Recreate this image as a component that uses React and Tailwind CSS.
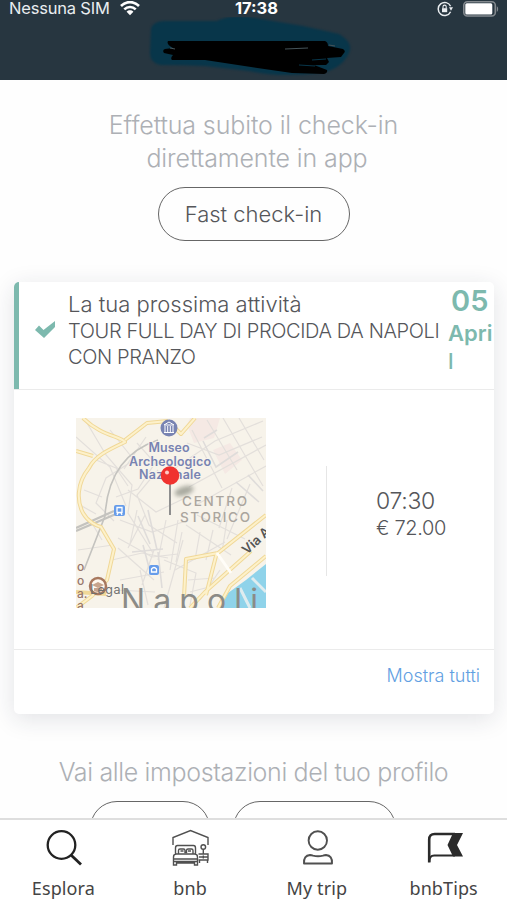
import React from 'react';

const StatusBar = () => (
  <div className="grid h-[17px] grid-cols-3 items-center px-2 text-[16.500px] leading-[17px] text-[#e9edf0]">
    <div className="flex items-center gap-2.5 pl-px whitespace-nowrap">
      <span className="tracking-[-0.2px]">Nessuna SIM</span>
      <svg className="h-[15px] w-5" viewBox="0 0 20 15" fill="none" stroke="#fff" strokeWidth="2.6">
        <path d="M1 5C6 -.2 14 -.2 19 5" />
        <path d="M4.3 8.4c3.2-3.2 8.2-3.2 11.4 0" />
        <path d="M6.6 10.7c1.9-1.8 4.9-1.8 6.8 0L10 14.3z" fill="#fff" stroke="none" />
      </svg>
    </div>
    <span className="pl-1.5 text-center font-bold text-white">17:38</span>
    <div className="flex items-center justify-end gap-2.5">
      <svg className="h-4 w-4" viewBox="0 0 16 16" fill="none" stroke="#e9edf0" strokeWidth="1.5">
        <path d="M13.6 5.2A6.5 6.5 0 1 0 13.6 10.7" />
        <path d="M12 6.2h4l-2 3.5z" fill="#e9edf0" stroke="none" />
        <path d="M5 7.2h5.2v4H5z" fill="#e9edf0" stroke="none" />
        <path d="M6 7.5V5.7a1.6 1.6 0 0 1 3.2 0v1.8" strokeWidth="1.1" />
      </svg>
      <svg className="h-4 w-9" viewBox="0 0 36 16">
        <rect x=".8" y=".8" width="31.5" height="14.2" rx="3.5" fill="none" stroke="#83898e" strokeWidth="1.6" />
        <rect x="2.3" y="2.3" width="27" height="11.2" rx="1.5" fill="#fff" />
        <path d="M33.8 5.2c1.8.8 1.8 4.8 0 5.6z" fill="#83898e" />
      </svg>
    </div>
  </div>
);

const Header = () => (
  <header className="h-20 shrink-0 bg-[#273640]">
    <StatusBar />
    {/* Scribbled-over title */}
    <svg className="ml-[148px] block h-[62px] w-[212px]" viewBox="148 17 212 62">
      <path
        d="M151 29q2-8 14-8h52q14-7 38-3l48 8 36 8q15 9 10 19-8 17-30 20-38 5-70-2L205 66q-22-1-44-1-11-2-11-12z"
        fill="#08364a"
        className="blur-[1px]"
      />
      <path
        d="M168 41h157q3 1 3 5l15 3q3 2 1 4l-3 4-14 1 2 4-3 3h-12l13 5q1 3-3 4l-32-1-41-6-46-7h-33q-2-2 1-5l-9-2q-2-3 1-4l8-1q-7-4-5-7z"
        fill="#000"
      />
      <path d="M285 49l23-1M170 48l5 1M329 45l6 1" stroke="#46545a" fill="none" />
      <path d="M312 60l14-1M299 65l16 1" stroke="#08364a" strokeWidth="1" fill="none" />
    </svg>
  </header>
);

const CityMap = () => (
  <svg className="h-[190px] w-[190px]" viewBox="76 418 190 190" fontFamily="Inter, sans-serif">
    <rect x="76" y="418" width="190" height="190" fill="#f7f3ea" />
    <path d="M190 418h30l-6 20-20 5-7-18zM213 450l17-7 12 17-17 14z" fill="#f5e9e4" />
    <path d="M266 564l-20 16-18 13-8 15h46z" fill="#8fd3ea" />
    <path d="M240 588l10 20M252 578l14 14" stroke="#dfecef" strokeWidth="3" />

    {/* Minor streets */}
    <g fill="none" stroke="#e3dfdb" strokeWidth="1.2">
      <path d="M84 418l22 37 26 30-4 28 25 40M76 437l34 30 16 39M110 430l24 30-28 18-10 25 18 18M137 443l18 20-17 26-22 8M96 460l20 8 12 18M146 437l-22 32M158 470l-21 25 12 30 28 18M128 490l28 22 27-13M120 520l32 12 31-10M118 538l34 19 26-3M145 515l-17 33M137 510l-7 34M166 520l-8 40M178 520l-8 50M118 548l36 32M140 570l8 35M154 550l-12 35M164 560l32 13-6 32M183 540l-19 68" />
      <path d="M187 443l32 12 43-18M175 468l40-27 48-20M192 430l30 58M207 420l30 50M223 418l40 68M239 418l25 42M189 487l77-42M196 505l70-39M232 488l-13 40M250 484l-23 55M186 525l45 30M197 515l48 24M175 570l50-28M182 532l-6 30M200 532l-5 28M213 530l-7 30M227 520l-5 32" />
      <path d="M112 560l30-7 26 5M120 580l44-8M115 590l40 2M90 520l12 20M78 550l35-5M200 600l20-30M188 580l27-2M190 592l23-6M84 490l18 7M80 505l16 9" />
    </g>
    <g fill="none" stroke="#dfdcda" strokeWidth="1.600">
      <path d="M138 516l12 28M148 510l9 40M143 545l8 30M158 552l4 36M132 552l31-3" />
      <path d="M204 438l13-8M203 441l13 26 22-15M236 482l23 20M248 475l15 16" />
    </g>

    {/* Railway */}
    <g fill="none" stroke="#c4c3bf" strokeWidth="1.6">
      <path d="M158 440c-36 12-51 40-53 76L84 570" />
      <path d="M76 531l40-17M76 528l38-17" strokeWidth="2.2" />
    </g>

    {/* Main roads */}
    <g fill="none" stroke="#f0d898" strokeWidth="4" strokeLinejoin="round">
      <path d="M83 418c18 18 37 18 42 24 -17 8-30 14-36 26-13 16-12 34-6 45 5 9 14 13 18 14l13 22-7 31-15 16-16 12" />
      <path d="M76 451l17 5M125 440l22-17 21-2M168 421l13 13 14-16" />
      <path d="M266 515l-48 38-32 6-2 38M217 552l-11 43M190 608l15-16 46-41M218 608l12-22 36-30" />
      <path d="M76 592l30 2" />
    </g>
    <g fill="none" stroke="#fdf1ca" strokeWidth="2" strokeLinejoin="round">
      <path d="M83 418c18 18 37 18 42 24 -17 8-30 14-36 26-13 16-12 34-6 45 5 9 14 13 18 14l13 22-7 31-15 16-16 12" />
      <path d="M76 451l17 5M125 440l22-17 21-2M168 421l13 13 14-16" />
      <path d="M266 515l-48 38-32 6-2 38M217 552l-11 43M190 608l15-16 46-41M218 608l12-22 36-30" />
    </g>
    <path d="M217 553l14 20" stroke="#fffdf8" strokeWidth="3" />

    {/* Stations */}
    <g fill="#669cea">
      <rect x="114" y="505" width="11" height="11" rx="2" />
      <rect x="149" y="565" width="10" height="10" rx="2" />
    </g>
    <g fill="none" stroke="#fff" strokeWidth="1.3">
      <path d="M117 507.500h5v5h-5zM117 515l1-2M122 515l-1-2" />
      <path d="M151.500 572v-3q2.500-3 5 0v3z" />
    </g>

    {/* Museum marker */}
    <circle cx="169" cy="428" r="8.500" fill="#7883b2" />
    <path d="M164 425l5-3 5 3zM165 426v6M167.700 426v6M170.300 426v6M173 426v6M164 432.500h10" fill="none" stroke="#fff" strokeWidth="1" />

    <g fill="#7883b2" fontSize="12.500" fontWeight="600" textAnchor="middle" stroke="#f7f3ea" strokeWidth="2" paintOrder="stroke">
      <text x="169" y="452" textLength="41">Museo</text>
      <text x="170" y="465.500" textLength="82">Archeologico</text>
      <text x="170" y="479" textLength="62">Nazionale</text>
    </g>
    <g fill="#aaa59e" fontSize="13.500" fontWeight="500">
      <text x="182" y="506" textLength="65">CENTRO</text>
      <text x="180" y="521.500" textLength="70">STORICO</text>
    </g>
    <text x="247" y="555" fill="#555" fontSize="13" fontWeight="600" transform="rotate(-43 247 555)">Via A</text>

    <text x="121" y="612" fill="#8b8b87" fontSize="32" textLength="137">Napoli</text>
    <g fill="#98766a" fontSize="12" fontWeight="500">
      <text x="77" y="571">o</text>
      <text x="77" y="584.500">o</text>
      <text x="77" y="598">a.</text>
      <text x="77" y="610">a</text>
    </g>
    <circle cx="98" cy="586" r="8" fill="#fff8ee" stroke="#a8785e" strokeWidth="2.500" />
    <path d="M92 585l6-3 6 3-6 3zM94 588v3q4 2 8 0v-3" fill="#c7a48c" />
    <text x="90" y="594" fill="#707070" fontSize="12.500" textLength="34">Legal</text>

    {/* Pin */}
    <ellipse cx="184" cy="491" rx="10" ry="4.500" fill="#777b70" opacity=".6" transform="rotate(-18 184 491)" className="blur-[2px]" />
    <path d="M170 482v33" stroke="#8e8e8e" strokeWidth="2" />
    <circle cx="170" cy="475.500" r="9.300" fill="#f0322f" />
    <circle cx="167" cy="472.500" r="2" fill="#ffc9c5" />
  </svg>
);

const ActivityCard = () => (
  <section className="mx-3.5 mt-[41px] h-[432px] w-[480px] overflow-hidden rounded-[5px] bg-white shadow-[0_5px_24px_rgba(30,40,60,0.13)]">
    <div className="flex h-[108px] border-b border-[#ebebeb]">
      <div className="h-[107px] w-[5px] shrink-0 bg-[#7db9ae]" />
      <div className="flex w-[49px] shrink-0 pt-[38px] pl-4">
        <svg className="h-[19px] w-[21px]" viewBox="0 0 21 19">
          <path d="M0 10l4-4.500 4.500 4.500L20 1v6L9 18z" fill="#7db9ae" />
        </svg>
      </div>
      <div className="w-[380px] shrink-0 pt-[9px] font-light whitespace-nowrap text-[#55565a]">
        <h2 className="text-[22px] leading-[27px]">La tua prossima attività</h2>
        <p className="text-[20px] leading-[26px] tracking-[-0.370px]">
          TOUR FULL DAY DI PROCIDA DA NAPOLI
          <br />
          CON PRANZO
        </p>
      </div>
      <div className="w-[46px] font-semibold text-[#7db9ae]">
        <p className="pt-px pl-[3px] text-[29px] leading-9">05</p>
        <p className="w-[46px] text-[22px] leading-7">
          Apri
          <br />
          <span className="font-medium">l</span>
        </p>
      </div>
    </div>
    <div className="flex h-[260px] border-b border-[#ebebeb]">
      <div className="w-[312px] pt-7 pl-[62px]">
        <CityMap />
      </div>
      <div className="mt-[76px] h-[110px] w-px bg-[#e6e6e6]" />
      <div className="pt-[97px] pl-[49px] font-light text-[#55565a]">
        <p className="text-[23px] leading-[28px] tracking-[-0.300px]">07:30</p>
        <p className="text-[20px] leading-[26px] tracking-[-0.350px]">€ 72.00</p>
      </div>
    </div>
    <div className="pt-3 pr-3.5 text-right text-[18px] leading-7 font-light text-[#62a0e2]">Mostra tutti</div>
  </section>
);

const SearchIcon = () => (
  <svg className="h-10 w-10" viewBox="0 0 40 40" fill="none" stroke="#222" strokeWidth="2.300">
    <circle cx="18.500" cy="17" r="13.800" />
    <path d="M28 27l10 9.500" strokeWidth="2.800" />
  </svg>
);

const BedIcon = () => (
  <svg className="h-10 w-10" viewBox="0 0 40 40" fill="none" stroke="#505050" strokeWidth="1.400">
    <path d="M3 17V9.500L20.500 2.500l17.500 7V17" />
    <path d="M5.500 26v-6q0-2.500 2-2.500h16q2 0 2 2.500v6M3.500 37v-8q0-3 3-3h18q3 0 3 3v8h-3v-2H6.500v2zM3.500 31h24M3.500 33.500h24" />
    <path d="M8.500 26v-3.500q0-1.500 1.500-1.500h3.500q1.500 0 1.500 1.500v2h1.500v-2q0-1.500 1.500-1.500h3.500q1.500 0 1.500 1.500V26M10.500 23h3M18 23h3" />
    <path d="M28.500 26H38v6h-9.500M29 29h9M37.500 32v3M29.500 32v3M33.300 26v-5M33.300 27.500v3" />
    <circle cx="33.300" cy="19" r="2.300" />
  </svg>
);

const PersonIcon = () => (
  <svg className="h-10 w-10" viewBox="0 0 40 40" fill="none" stroke="#505050" strokeWidth="1.900">
    <circle cx="20.800" cy="12.500" r="9.200" />
    <path d="M7 35.500q-.5-8 6-8.500 1.500 0 3 .6 5 1.200 10 0 1.500-.6 3-.6 6.500.5 6 8.500z" strokeLinejoin="round" />
  </svg>
);

const FlagIcon = () => (
  <svg className="h-10 w-10" viewBox="0 0 40 40" fill="none" stroke="#2b2b2b" strokeWidth="2.200">
    <path d="M5.200 34.500V11.500q0-5.500 5.500-5.500H31" strokeWidth="2.600" />
    <path d="M5.200 34q0-6.500 5-6.500H31" />
    <path d="M29 5h10l-6 12 6 11.500H29L23.500 17z" fill="#2b2b2b" stroke="none" />
  </svg>
);

const tabs = [
  { label: 'Esplora', Icon: SearchIcon },
  { label: 'bnb', Icon: BedIcon },
  { label: 'My trip', Icon: PersonIcon },
  { label: 'bnbTips', Icon: FlagIcon },
];

const TabBar = () => (
  <nav className="grid h-[82px] shrink-0 grid-cols-4 border-t-2 border-[#dedede] bg-white">
    {tabs.map(({ label, Icon }) => (
      <div key={label} className="flex flex-col items-center pt-2">
        <Icon />
        <span className="mt-[6px] font-['Noto_Sans',sans-serif] text-[18px] leading-7 tracking-[0.1px] text-[#444]">{label}</span>
      </div>
    ))}
  </nav>
);

const App = () => (
  <div className="flex h-[900px] w-[507px] flex-col overflow-hidden bg-white font-['Inter',sans-serif]">
    <Header />
    <main className="flex-1 overflow-hidden bg-[#fefefe]">
      <div className="pt-[29px] text-center text-[25px] leading-[33px] font-light tracking-[-0.120px] text-[#adb0b5]">
        <p>Effettua subito il check-in</p>
        <p className="pl-[7px]">direttamente in app</p>
      </div>
      <button className="mx-auto mt-3 block h-[54px] w-48 rounded-full border border-[#666] text-[22px] font-light text-[#55565a]">
        Fast check-in
      </button>
      <ActivityCard />
      <p className="mt-[42px] text-center text-[25px] leading-[33px] font-light tracking-[-0.350px] text-[#adb0b5]">
        Vai alle impostazioni del tuo profilo
      </p>
      <div className="mt-3 flex gap-[23px] pl-[90px]">
        <div className="h-[54px] w-[120px] rounded-full border border-[#666]" />
        <div className="h-[54px] w-[163px] rounded-full border border-[#666]" />
      </div>
    </main>
    <TabBar />
  </div>
);

export default App;
